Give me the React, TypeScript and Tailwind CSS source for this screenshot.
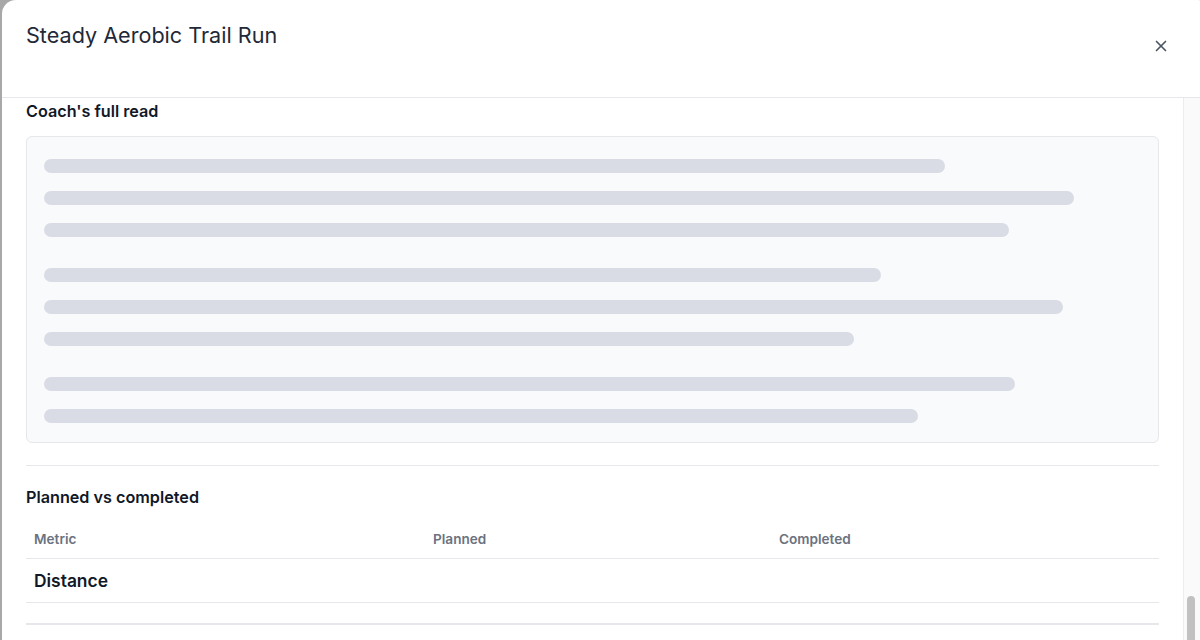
import React from 'react';
import { X } from 'lucide-react';

const skeletonGroups: number[][] = [
  [901, 1030, 965],
  [837, 1019, 810],
  [971, 874],
];

const SkeletonBar: React.FC<{ width: number }> = ({ width }) => (
  <div className="h-[14px] rounded-full bg-[#d9dce4]" style={{ width }} />
);

const App: React.FC = () => {
  return (
    <div
      className="flex h-[640px] w-[1200px] overflow-hidden bg-[#a8a8a8]"
      style={{ fontFamily: 'Inter, "Noto Sans", sans-serif' }}
    >
      <div className="ml-[2px] flex w-[1210px] shrink-0 flex-col rounded-t-[14px] bg-white">
        {/* Header */}
        <div className="flex h-[98px] shrink-0 items-start justify-between border-b border-[#e5e7eb] pl-[24px] pr-[42px] pt-[20px]">
          <h2 className="text-[21.6px] leading-[30px] font-normal text-[#1f2937]">Steady Aerobic Trail Run</h2>
          <button type="button" className="mt-[17px] text-[#4b5563]" aria-label="Close">
            <X size={18} strokeWidth={2.2} />
          </button>
        </div>

        <div className="flex min-h-0 flex-1">
          {/* Body */}
          <div className="w-[1181px] shrink-0 overflow-hidden pl-[24px] pr-[24px]">
            <section className="pt-[1px]">
              <h3 className="text-[16.2px] leading-[24px] font-semibold text-[#111827]">Coach's full read</h3>
              <div className="mt-[13px] flex flex-col gap-[31px] rounded-md border border-[#e5e7eb] bg-[#f9fafb] pb-[19px] pl-[17px] pr-[17px] pt-[22px]">
                {skeletonGroups.map((group, gi) => (
                  <div key={gi} className="flex flex-col gap-[18px]">
                    {group.map((w, i) => (
                      <SkeletonBar key={i} width={w} />
                    ))}
                  </div>
                ))}
              </div>
            </section>

            <div className="mt-[22px] border-t border-[#e5e7eb]" />

            <section className="pt-[20px]">
              <h3 className="text-[16.2px] leading-[22px] font-semibold text-[#111827]">Planned vs completed</h3>
              <div className="mt-[22px]">
                <div className="grid grid-cols-[399px_346px_1fr] border-b border-[#e5e7eb] pb-[10px] text-[13.6px] leading-[18px] font-semibold text-[#6b7280]">
                  <div className="px-2">Metric</div>
                  <div className="px-2">Planned</div>
                  <div className="px-2">Completed</div>
                </div>
                <div className="grid h-[44px] grid-cols-[399px_346px_1fr] items-center border-b border-[#e5e7eb]">
                  <div className="px-2 text-[17.4px] leading-[24px] font-semibold text-[#111827]">Distance</div>
                  <div className="px-2" />
                  <div className="px-2" />
                </div>
                <div className="h-[22px] border-b-2 border-[#e5e7eb]" />
              </div>
            </section>
          </div>

          {/* Scrollbar */}
          <div className="flex w-[17px] shrink-0 flex-col justify-end border-l border-[#ececec] bg-[#fafafa] pl-[3px] pr-[5px]">
            <div className="h-[44px] rounded-t-full bg-[#c1c1c1]" />
          </div>
        </div>
      </div>
    </div>
  );
};

export default App;
